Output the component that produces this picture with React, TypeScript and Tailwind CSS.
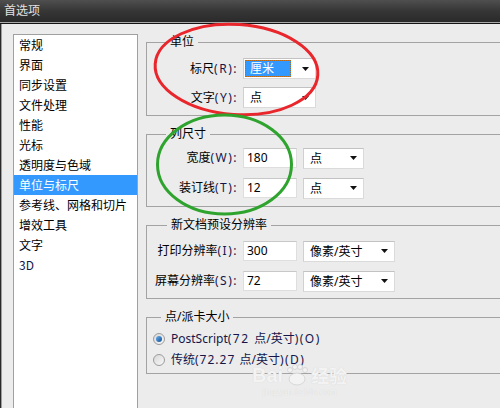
import React from "react";

const Arrow = () => (
  <svg width="7" height="4" viewBox="0 0 7 4" className="shrink-0">
    <path d="M0 0H7L3.5 4Z" fill="#111" />
  </svg>
);

const Select = ({ w, text, selected }: { w: string; text: string; selected?: boolean }) => (
  <div
    className={`${w} h-[21px] bg-white border border-[#dadada] border-t-[#c2c2c2] border-l-[#d0d0d0] flex items-center pr-[6px] pl-[1px]`}
  >
    {selected ? (
      <div className="flex-1 h-[17px] bg-[#3399ff] border border-dotted border-[#b86a1a] text-white pl-[4px] leading-[15px] mr-[11px]">
        {text}
      </div>
    ) : (
      <div className="flex-1 pl-[5px] leading-[19px]">{text}</div>
    )}
    <Arrow />
  </div>
);

const Input = ({ value }: { value: string }) => (
  <div className="w-[54px] h-[20px] bg-white border border-[#dedede] border-t-[#c8c8c8] pl-[3px] leading-[18px]">
    {value}
  </div>
);

const Label = ({ cn, lat }: { cn: string; lat: string }) => (
  <div className="w-[91px] text-right whitespace-nowrap">
    {cn}
    <span className="text-[#15154a] tracking-[1.5px]">{lat}</span>
  </div>
);

const Radio = ({ checked }: { checked?: boolean }) => (
  <div className="w-[12px] h-[12px] rounded-full border border-[#9c9c9c] bg-gradient-to-br from-[#d8d8d8] to-[#f8f8f8] flex items-center justify-center shrink-0">
    {checked && <div className="w-[6px] h-[6px] rounded-full bg-gradient-to-br from-[#6ab0ec] to-[#0c4f94]" />}
  </div>
);

const items = [
  "常规",
  "界面",
  "同步设置",
  "文件处理",
  "性能",
  "光标",
  "透明度与色域",
  "单位与标尺",
  "参考线、网格和切片",
  "增效工具",
  "文字",
  "3D",
];

export default function App() {
  return (
    <div className="w-[500px] h-[408px] overflow-hidden relative bg-[#ececec] text-[12px] text-black font-['Noto_Sans','Noto_Sans_CJK_SC',sans-serif]">
      <div className="h-[22px] bg-gradient-to-b from-[#4f4f4f] via-[#363636] to-[#2a2a2a] text-[#e2e2e2] pl-[4px] leading-[19px] font-['Noto_Sans_CJK_SC',sans-serif]">
        首选项
      </div>
      <div className="h-px bg-[#a9a9a9]" />
      <div className="h-px bg-[#141414]" />
      <div className="flex h-[384px] border-l border-l-[#2a2a2a] overflow-hidden">
        <div className="flex w-full border-l border-l-[#9e9e9e] overflow-hidden">
          {/* list */}
          <div className="ml-[11px] mt-[10px] w-[125px] h-[400px] shrink-0 bg-white border border-[#a0a0a0] font-['Noto_Sans_CJK_SC',sans-serif]">
            {items.map((t, i) => (
              <div
                key={t}
                className={`h-[20px] leading-[20px] pl-[5px] whitespace-nowrap ${
                  i === 7 ? "bg-[#3399ff] text-white" : i === 11 ? "text-[#15154a]" : ""
                }`}
              >
                {t}
              </div>
            ))}
          </div>

          {/* right */}
          <div className="ml-[8px] mt-[10px] w-[380px] shrink-0 flex flex-col gap-[10px]">
            <fieldset className="border border-[#a3a3a3] pt-[4px] pb-[3px]">
              <legend className="ml-[19px] px-[4px] leading-[16px]">单位</legend>
              <div className="h-[29px] flex items-center">
                <Label cn="标尺" lat="(R):" />
                <div className="ml-[5px]">
                  <Select w="w-[73px]" text="厘米" selected />
                </div>
              </div>
              <div className="h-[29px] flex items-center">
                <Label cn="文字" lat="(Y):" />
                <div className="ml-[5px]">
                  <Select w="w-[73px]" text="点" />
                </div>
              </div>
            </fieldset>

            <fieldset className="border border-[#a3a3a3] pt-[1px] pb-[3px]">
              <legend className="ml-[19px] px-[4px] leading-[16px]">列尺寸</legend>
              <div className="h-[30px] flex items-center">
                <Label cn="宽度" lat="(W):" />
                <div className="ml-[5px] flex items-center gap-[6px]">
                  <Input value="180" />
                  <Select w="w-[61px]" text="点" />
                </div>
              </div>
              <div className="h-[30px] flex items-center">
                <Label cn="装订线" lat="(T):" />
                <div className="ml-[5px] flex items-center gap-[6px]">
                  <Input value="12" />
                  <Select w="w-[61px]" text="点" />
                </div>
              </div>
            </fieldset>

            <fieldset className="border border-[#a3a3a3] pt-[3px] pb-[2px]">
              <legend className="ml-[20px] px-[4px] leading-[16px]">新文档预设分辨率</legend>
              <div className="h-[30px] flex items-center">
                <Label cn="打印分辨率" lat="(I):" />
                <div className="ml-[5px] flex items-center gap-[6px]">
                  <Input value="300" />
                  <Select w="w-[92px]" text="像素/英寸" />
                </div>
              </div>
              <div className="h-[30px] flex items-center">
                <Label cn="屏幕分辨率" lat="(S):" />
                <div className="ml-[5px] flex items-center gap-[6px]">
                  <Input value="72" />
                  <Select w="w-[92px]" text="像素/英寸" />
                </div>
              </div>
            </fieldset>

            <fieldset className="border border-[#a3a3a3] pt-[3px] pb-[3px]">
              <legend className="ml-[14px] px-[4px] leading-[16px]">点/派卡大小</legend>
              <div className="h-[21px] flex items-center pl-[6px] gap-[6px] text-[#15154a] whitespace-nowrap">
                <Radio checked />
                <span>
                  PostScript<span className="tracking-[1.5px]">(72 </span>点/英寸
                  <span className="tracking-[1.5px]">)(O)</span>
                </span>
              </div>
              <div className="h-[21px] flex items-center pl-[6px] gap-[6px] text-[#15154a] whitespace-nowrap">
                <Radio />
                <span>
                  传统<span className="tracking-[1px]">(72.27 </span>点/英寸
                  <span className="tracking-[1.5px]">)(D)</span>
                </span>
              </div>
            </fieldset>
          </div>
        </div>
      </div>

      {/* watermark */}
      <div className="absolute left-[252px] top-[364px] flex flex-col items-center text-[#f3f3f3] [text-shadow:0_0_1px_#cfcfcf]">
        <div className="flex items-end font-bold text-[20px] leading-[21px] font-['Liberation_Sans',sans-serif]">
          <span>Bai</span>
          <svg width="26" height="22" viewBox="0 0 26 22" className="mx-[1px]">
            <g fill="#f3f3f3" stroke="#d0d0d0" strokeWidth="0.8">
              <ellipse cx="13" cy="15" rx="8" ry="6" />
              <circle cx="6" cy="6" r="2.5" />
              <circle cx="11" cy="3" r="2.5" />
              <circle cx="16" cy="3" r="2.5" />
              <circle cx="21" cy="6" r="2.5" />
            </g>
          </svg>
          <span className="font-['Noto_Sans_CJK_SC',sans-serif] text-[18px]">经验</span>
        </div>
        <div className="text-[10px] leading-[12px] font-['Liberation_Serif',serif]">jingyan.baidu.com</div>
      </div>

      {/* annotations */}
      <svg className="absolute left-0 top-0 pointer-events-none" width="500" height="408">
        <ellipse cx="236.5" cy="69.5" rx="81.5" ry="45" fill="none" stroke="#e9262b" strokeWidth="3" transform="rotate(4 236.5 69.5)" />
        <ellipse cx="224.5" cy="164.5" rx="67" ry="49.5" fill="none" stroke="#2ea42e" strokeWidth="3" />
      </svg>
    </div>
  );
}
